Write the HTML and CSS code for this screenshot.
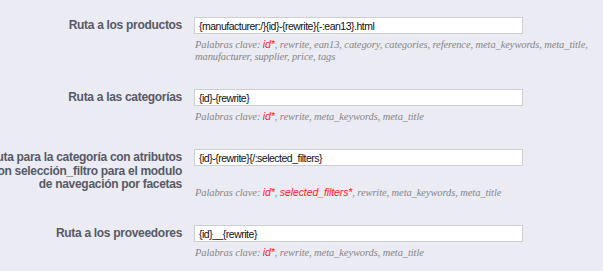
FILE: index.html
```html
<!DOCTYPE html>
<html lang="es">

<head>
    <meta charset="UTF-8">
    <meta name="viewport" content="width=device-width, initial-scale=1.0">
    <title>Rutas</title>
    <link rel="stylesheet" href="styles.css">
</head>

<body>
    <div class="form">
        <div class="row">
            <label class="label">Ruta a los productos</label>
            <div class="field">
                <input class="text" type="text" value="{manufacturer:/}{id}-{rewrite}{-:ean13}.html">
                <p class="desc">Palabras clave: <span class="req">id*</span>, rewrite, ean13, category, categories, reference, meta_keywords, meta_title, manufacturer, supplier, price, tags</p>
            </div>
        </div>
        <div class="row">
            <label class="label">Ruta a las categorías</label>
            <div class="field">
                <input class="text" type="text" value="{id}-{rewrite}">
                <p class="desc">Palabras clave: <span class="req">id*</span>, rewrite, meta_keywords, meta_title</p>
            </div>
        </div>
        <div class="row">
            <label class="label">Ruta para la categoría con atributos<br>con selección_filtro para el modulo<br>de navegación por facetas</label>
            <div class="field">
                <input class="text" type="text" value="{id}-{rewrite}{/:selected_filters}">
                <p class="desc desc-low">Palabras clave: <span class="req">id*</span>, <span class="req">selected_filters*</span>, rewrite, meta_keywords, meta_title</p>
            </div>
        </div>
        <div class="row">
            <label class="label">Ruta a los proveedores</label>
            <div class="field">
                <input class="text" type="text" value="{id}__{rewrite}">
                <p class="desc">Palabras clave: <span class="req">id*</span>, rewrite, meta_keywords, meta_title</p>
            </div>
        </div>
    </div>
</body>
</html>
```

FILE: styles.css
```css
* {
    margin: 0;
    box-sizing: border-box;
    padding: 0;
}

body {
    background: #ebebf3;
    font-family: "Liberation Sans", Arial, sans-serif;
    overflow: hidden;
}

.form {
    margin-left: -60px;
    padding-top: 17px;
}

.row {
    display: flex;
    padding-bottom: 26px;
}

.label {
    flex: none;
    width: 254px;
    padding-top: 2px;
    padding-right: 12px;
    text-align: right;
    white-space: nowrap;
    font-size: 12px;
    font-weight: bold;
    letter-spacing: -0.3px;
    line-height: 13.5px;
    color: #575a66;
}

.field {
    width: 410px;
}

.text {
    display: block;
    width: 329px;
    height: 17px;
    padding: 0 4px;
    border: 1px solid #cdcdd2;
    background: #fff;
    font-family: "Liberation Sans", Arial, sans-serif;
    font-size: 10.5px;
    letter-spacing: -0.5px;
    color: #111;
}

.desc {
    margin-top: 4px;
    padding-left: 1px;
    font-family: "Liberation Serif", Georgia, serif;
    font-style: italic;
    font-size: 10.5px;
    letter-spacing: -0.1px;
    line-height: 12px;
    color: #868686;
}

.desc-low {
    margin-top: 20px;
}

.req {
    font-family: "Liberation Sans", Arial, sans-serif;
    color: #f22;
}
```
